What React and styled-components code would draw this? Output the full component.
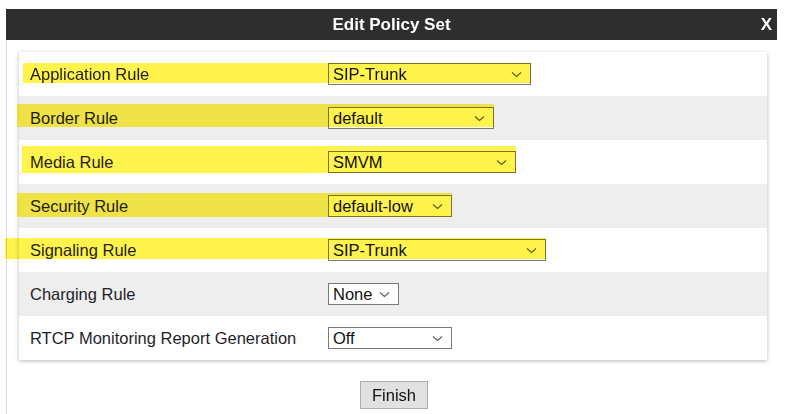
import styled, { createGlobalStyle } from 'styled-components'

const GlobalStyle = createGlobalStyle`
  html, body {
    margin: 0;
    padding: 0;
    background: #ffffff;
    font-family: "Liberation Sans", Arial, sans-serif;
  }
`

const Page = styled.div`
  width: 790px;
  height: 414px;
  padding: 9px 13px 0 6px;
  box-sizing: border-box;
  overflow: hidden;
`

const Dialog = styled.div`
  height: 405px;
  border-left: 1px solid #dcdcdc;
  display: flex;
  flex-direction: column;
`

const Header = styled.div`
  height: 31px;
  background: #2e2e2e;
  display: flex;
  align-items: center;
  justify-content: center;
  position: relative;
  color: #ffffff;
  font-weight: bold;
  font-size: 17px;
  margin-left: -1px;
`

const CloseBtn = styled.span`
  position: absolute;
  right: 5px;
  top: 6px;
  font-size: 17px;
  cursor: pointer;
`

const Body = styled.div`
  padding: 12px 10px 0 12px;
  display: flex;
  flex-direction: column;
  align-items: stretch;
`

const Panel = styled.div`
  background: #ffffff;
  box-shadow: 0 1px 4px rgba(0, 0, 0, 0.28);
  display: flex;
  flex-direction: column;
`

const Row = styled.div`
  position: relative;
  height: 44px;
  display: flex;
  align-items: center;
  background: ${(p) => (p.$shaded ? '#eeeeee' : '#ffffff')};
`

const Label = styled.div`
  width: 309px;
  box-sizing: border-box;
  padding-left: 11px;
  font-size: 16.5px;
  color: #1f1f2a;
`

const SelectBox = styled.div`
  width: ${(p) => p.$width}px;
  height: 22px;
  box-sizing: border-box;
  border: 1px solid #7a7a7a;
  background: #ffffff;
  display: flex;
  align-items: center;
  justify-content: space-between;
  padding: 0 8px 0 4px;
  font-size: 16.5px;
  color: #111111;
`

const Chevron = styled.svg`
  width: 11px;
  height: 7px;
  flex: none;
`

const Highlight = styled.div`
  position: absolute;
  left: ${(p) => p.$left}px;
  top: ${(p) => p.$top}px;
  width: ${(p) => p.$width}px;
  height: ${(p) => p.$height}px;
  background: #fff34c;
  mix-blend-mode: multiply;
  pointer-events: none;
`

const Actions = styled.div`
  display: flex;
  justify-content: center;
  padding-top: 21px;
  padding-left: 2px;
`

const Button = styled.button`
  width: 68px;
  height: 28px;
  background: #e1e1e1;
  border: 1px solid #adadad;
  font-family: "Liberation Sans", Arial, sans-serif;
  font-size: 16.5px;
  color: #111111;
  padding: 0;
`

const rules = [
  { label: 'Application Rule', value: 'SIP-Trunk', width: 203, hl: { left: 4, top: 11, width: 508, height: 20 } },
  { label: 'Border Rule', value: 'default', width: 166, hl: { left: -2, top: 8, width: 477, height: 23 } },
  { label: 'Media Rule', value: 'SMVM', width: 188, hl: { left: 3, top: 6, width: 494, height: 27 } },
  { label: 'Security Rule', value: 'default-low', width: 124, hl: { left: -2, top: 9, width: 435, height: 24 } },
  { label: 'Signaling Rule', value: 'SIP-Trunk', width: 218, hl: { left: -14, top: 10, width: 541, height: 21 } },
  { label: 'Charging Rule', value: 'None', width: 71 },
  { label: 'RTCP Monitoring Report Generation', value: 'Off', width: 124 },
]

export default function App() {
  return (
    <>
      <GlobalStyle />
      <Page>
        <Dialog>
          <Header>
            Edit Policy Set
            <CloseBtn>X</CloseBtn>
          </Header>
          <Body>
            <Panel>
              {rules.map((r, i) => (
                <Row key={r.label} $shaded={i % 2 === 1}>
                  <Label>{r.label}</Label>
                  <SelectBox $width={r.width}>
                    <span>{r.value}</span>
                    <Chevron viewBox="0 0 11 7">
                      <path d="M1 1.5 L5.5 5.5 L10 1.5" fill="none" stroke="#606060" strokeWidth="1.2" />
                    </Chevron>
                  </SelectBox>
                  {r.hl && (
                    <Highlight
                      $left={r.hl.left}
                      $top={r.hl.top}
                      $width={r.hl.width}
                      $height={r.hl.height}
                    />
                  )}
                </Row>
              ))}
            </Panel>
            <Actions>
              <Button>Finish</Button>
            </Actions>
          </Body>
        </Dialog>
      </Page>
    </>
  )
}
